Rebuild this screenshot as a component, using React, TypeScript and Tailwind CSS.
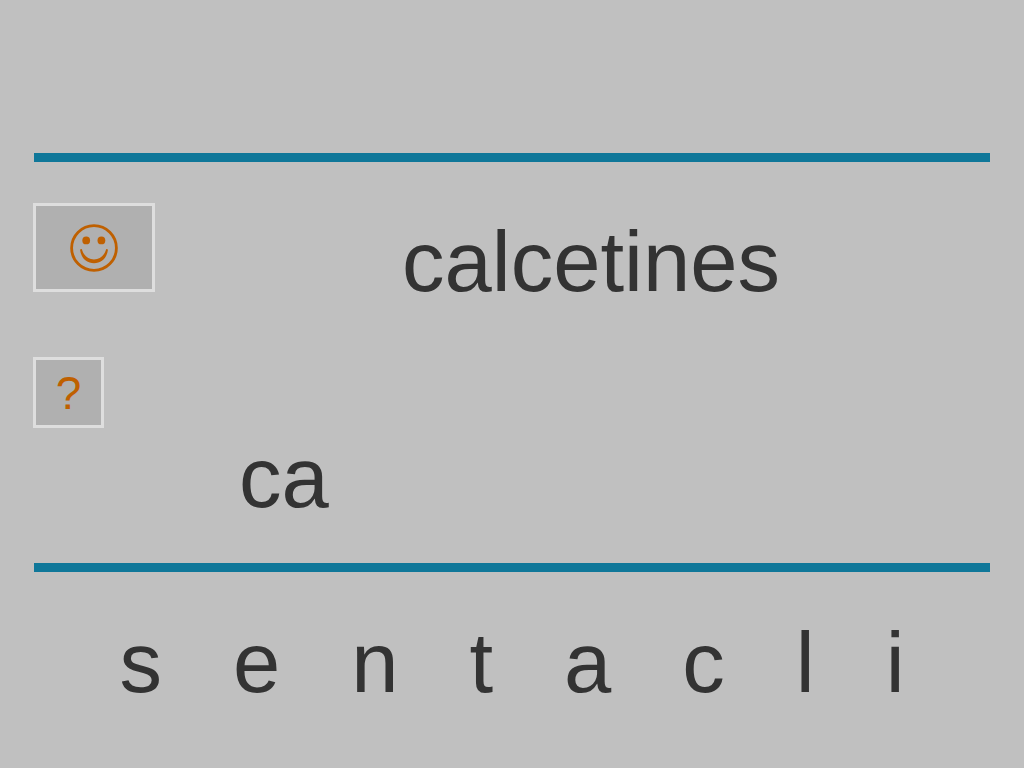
const WORD = 'calcetines';
const TYPED = 'ca';
const LETTERS = ['s', 'e', 'n', 't', 'a', 'c', 'l', 'i'];

function SmileIcon() {
  return (
    <svg width="48" height="48" viewBox="0 0 48 48" aria-hidden="true">
      <circle cx="24" cy="24" r="22.4" fill="none" stroke="currentColor" strokeWidth="2.8" />
      <circle cx="16.2" cy="16.4" r="3.9" fill="currentColor" />
      <circle cx="31.4" cy="16.4" r="3.9" fill="currentColor" />
      <path
        d="M10 25.5C11 34 16.5 39.2 24 39.2S37 34 38 25.5L36.2 25C34.5 31.500 30 35.400 24 35.400S13.500 31.500 11.800 25Z"
        fill="currentColor"
      />
    </svg>
  );
}

function Rule() {
  return <hr className="mx-px h-[9px] border-0 bg-[#0f7799]" />;
}

export default function App() {
  return (
    <main className="min-h-screen bg-[#c0c0c0] px-[33px] pt-[153px] font-['Liberation_Sans',Arial,sans-serif] text-[85px] leading-none text-[#333333]">
      <Rule />

      <div className="flex pt-[41px] pb-[43px]">
        {/* Check / hint buttons */}
        <div className="flex flex-col items-start gap-[65px]">
          <button
            type="button"
            aria-label="Comprobar"
            className="flex h-[89px] w-[122px] items-center justify-center border-3 border-[#dedede] bg-[#b0b0b0] text-[#bf6000]"
          >
            <SmileIcon />
          </button>
          <button
            type="button"
            className="flex size-[71px] items-center justify-center border-3 border-[#dedede] bg-[#b0b0b0] text-[46px] leading-none text-[#bf6000]"
          >
            ?
          </button>
        </div>

        {/* Target word and what has been spelled so far */}
        <div className="flex flex-1 flex-col gap-[131px] pt-4">
          <h1 className="pl-9 text-center">{WORD}</h1>
          <p className="pl-[84px]">{TYPED}</p>
        </div>
      </div>

      <Rule />

      <div className="flex justify-center gap-[71px] pt-12">
        {LETTERS.map((letter) => (
          <button key={letter} type="button" className="leading-none">
            {letter}
          </button>
        ))}
      </div>
    </main>
  );
}
